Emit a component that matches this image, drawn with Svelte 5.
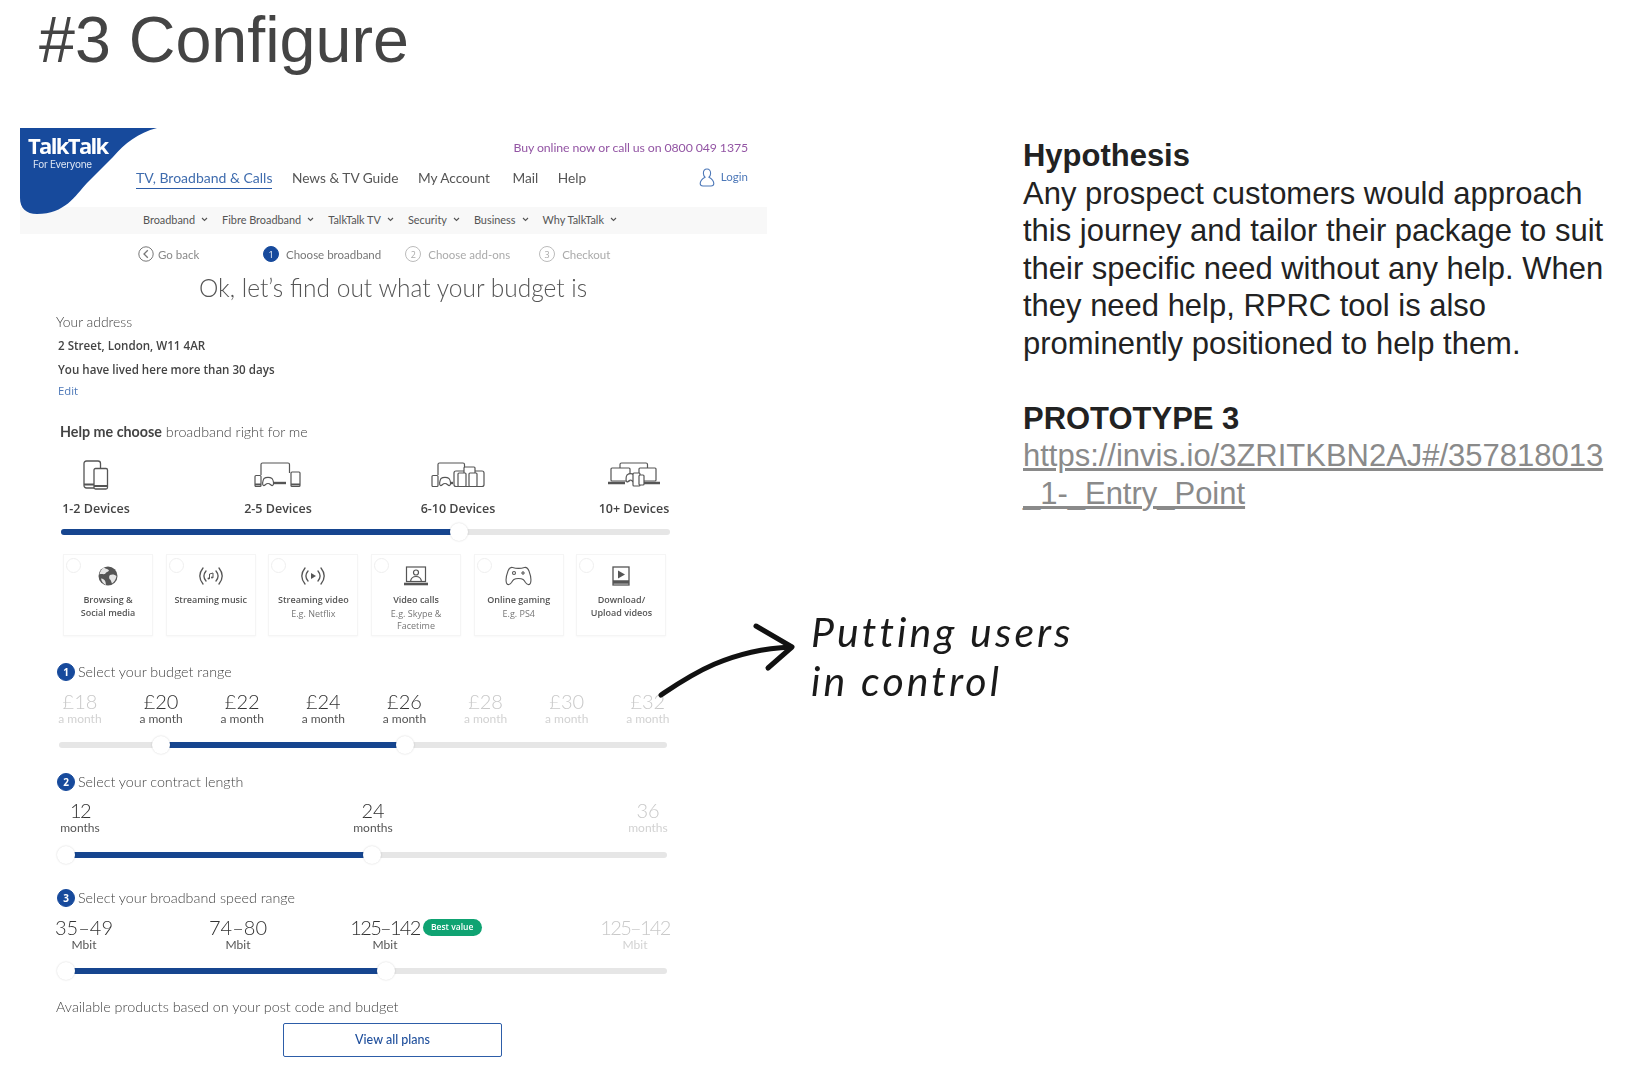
<script>
  const subnav = ['Broadband', 'Fibre Broadband', 'TalkTalk TV', 'Security', 'Business', 'Why TalkTalk'];
  const budget = [18, 20, 22, 24, 26, 28, 30, 32].map((v) => ({ v, on: v >= 20 && v <= 26 }));
  const cards = [
    { k: 'globe', t: ['Browsing &', 'Social media'], s: [] },
    { k: 'music', t: ['Streaming music'], s: [] },
    { k: 'video', t: ['Streaming video'], s: ['E.g. Netflix'] },
    { k: 'call', t: ['Video calls'], s: ['E.g. Skype &', 'Facetime'] },
    { k: 'game', t: ['Online gaming'], s: ['E.g. PS4'] },
    { k: 'down', t: ['Download/', 'Upload videos'], s: [] }
  ];
  const pct = (px) => ((px - 59) / 608) * 100;
</script>

<div class="page">
  <h1 class="title">#3 Configure</h1>
  <div class="content">
    <div class="mock">
      <header class="head">
        <div class="logo">
          <svg class="logo-bg" width="138" height="87" viewBox="0 0 138 87">
            <path d="M0 0H137C118 5 105 15 93 29L67 55C55 68 45 86 17 86C6 86 0 80 0 70Z" fill="#174a9c" />
          </svg>
          <span class="logo-a">TalkTalk</span>
          <span class="logo-b">For Everyone</span>
        </div>
        <div class="buy">Buy online now or call us on 0800 049 1375</div>
        <nav class="nav">
          <span class="active">TV, Broadband &amp; Calls</span>
          <span>News &amp; TV Guide</span>
          <span>My Account</span>
          <span class="mail">Mail</span>
          <span>Help</span>
          <span class="login">
            <svg width="16" height="19" viewBox="0 0 16 19" fill="none" stroke="#4d78b8" stroke-width="1.1">
              <path d="M8 1C5.6 1 4.4 3 4.4 5.2C4.4 7 5.2 8.4 6 9.2C3.6 10.6 1.2 13 1.2 15.6C1.2 17.2 2.4 18 4 18H12C13.6 18 14.8 17.2 14.8 15.6C14.8 13 12.4 10.6 10 9.2C10.8 8.4 11.6 7 11.6 5.2C11.6 3 10.4 1 8 1Z" />
            </svg>
            Login
          </span>
        </nav>
      </header>

      <div class="subnav">
        {#each subnav as item}
          <span class="sub-item">{item}
            <svg width="7" height="5" viewBox="0 0 7 5" fill="none" stroke="#555" stroke-width="1.1"><path d="M1 1l2.5 2.5L6 1" /></svg>
          </span>
        {/each}
      </div>

      <div class="steps">
        <span class="back">
          <svg width="16" height="16" viewBox="0 0 16 16" fill="none" stroke="#777" stroke-width="1"><circle cx="8" cy="8" r="7.2" /><path d="M9.8 4.2L6 8l3.8 3.8" stroke-width="1.3" /></svg>
          Go back
        </span>
        <span class="step now"><i class="dot solid">1</i>Choose broadband</span>
        <span class="step"><i class="dot">2</i>Choose add-ons</span>
        <span class="step last"><i class="dot">3</i>Checkout</span>
      </div>

      <h2 class="lead">Ok, let’s find out what your budget is</h2>

      <div class="addr">
        <div class="addr-h">Your address</div>
        <div class="addr-l">2 Street, London, W11 4AR</div>
        <div class="addr-l">You have lived here more than 30 days</div>
        <div class="addr-e">Edit</div>
      </div>

      <div class="help"><b>Help me choose</b> broadband right for me</div>

      <div class="devices">
        <div class="device">
          <svg width="26" height="30" viewBox="0 0 26 30" fill="none" stroke="#555" stroke-width="1.3">
            <path d="M13 28H3.5C2 28 1 27 1 25.5V3.5C1 2 2 1 3.5 1H15C16.6 1 17.5 2 17.5 3.5V8" />
            <rect x="11" y="8.5" width="13.5" height="20.5" rx="1.5" fill="#fff" />
            <path d="M11 26h13.5M1 24.5h10" stroke-width="2" />
          </svg>
          <span>1-2 Devices</span>
        </div>
        <div class="device">
          <svg width="48" height="26" viewBox="0 0 48 26" fill="none" stroke="#555" stroke-width="1.2">
            <path d="M7 13V2.5C7 1.5 7.5 1 8.5 1H34C35 1 35.5 1.5 35.5 2.5V11" />
            <path d="M15 21H32" stroke-width="2.4" />
            <rect x="1" y="13.5" width="6" height="11" rx="1" fill="#fff" />
            <path d="M10 16.5C12 15 16 15 18 16.5C20 19 20 23 18.5 23.5C17 24 16.5 21.5 14 21.5C11.5 21.5 11 24 9.5 23.5C8 23 8.5 19 10 16.5Z" fill="#fff" />
            <rect x="37" y="10" width="9" height="14.5" rx="1" fill="#fff" />
            <path d="M37 22.5h9M1 22.5h6" stroke-width="1.8" />
          </svg>
          <span>2-5 Devices</span>
        </div>
        <div class="device">
          <svg width="54" height="26" viewBox="0 0 54 26" fill="none" stroke="#555" stroke-width="1.2">
            <path d="M7 13V2.5C7 1.5 7.5 1 8.5 1H32C33 1 33.5 1.5 33.5 2.5V6" />
            <path d="M15 21H22" stroke-width="2.4" />
            <rect x="1" y="13.5" width="6" height="11" rx="1" fill="#fff" />
            <path d="M10 16.5C12 15 16 15 18 16.5C20 19 20 23 18.5 23.5C17 24 16.5 21.5 14 21.5C11.5 21.5 11 24 9.5 23.5C8 23 8.5 19 10 16.5Z" fill="#fff" />
            <rect x="23" y="9" width="30" height="15.5" rx="2" fill="#fff" />
            <rect x="33" y="5" width="11" height="19.5" rx="1" fill="#fff" />
            <rect x="27" y="11" width="8" height="13.5" rx="1" fill="#fff" />
            <rect x="38" y="11" width="8" height="13.5" rx="1" fill="#fff" />
          </svg>
          <span>6-10 Devices</span>
        </div>
        <div class="device">
          <svg width="54" height="26" viewBox="0 0 54 26" fill="none" stroke="#555" stroke-width="1.2">
            <path d="M13 8V2.5C13 1.5 13.5 1 14.5 1H39C40 1 40.5 1.5 40.5 2.5V8" />
            <rect x="4" y="6" width="19" height="13" rx="1" fill="#fff" />
            <rect x="32" y="6" width="17" height="13" rx="1" fill="#fff" />
            <path d="M1 21H18M36 21H53" stroke-width="2.6" />
            <path d="M20 13C22 11.5 25 11.5 27 13C29 15 28 20 27 20C25.5 20 25 18 23.5 18C22 18 21.5 20 20 20C19 20 18.5 15 20 13Z" fill="#fff" />
            <rect x="26" y="11" width="7" height="13" rx="1" fill="#fff" />
            <rect x="32" y="13" width="5" height="10" rx="1" fill="#fff" />
          </svg>
          <span>10+ Devices</span>
        </div>
      </div>

      <div class="slider dev">
        <div class="fill" style="left:0;width:65%"></div>
        <div class="thumb" style="left:65.4%"></div>
      </div>

      <div class="cards">
        {#each cards as c}
          <div class="card">
            <i class="radio"></i>
            <div class="ic">
              {#if c.k === 'globe'}
                <svg width="20" height="20" viewBox="0 0 20 20">
                  <circle cx="10" cy="10" r="9.5" fill="#555" />
                  <path d="M6 1.5C8 3 10 3 11 4.5C10 6 8 6 7 8C5 8.5 3 7.5 1.5 8.5C2 5.5 3.5 3 6 1.5ZM12 9C14 8 17 8.5 18.5 10C18 13 16.5 16 14 17.5C13 15 13 14 11.5 13C11 11.5 11 10 12 9ZM3 12.5C5 12.5 7 14 7.5 16C7.5 17 8 18 8 19C5.5 18 3.5 15.5 3 12.5Z" fill="#fff" opacity=".85" />
                </svg>
              {:else if c.k === 'music' || c.k === 'video'}
                <svg width="28" height="20" viewBox="0 0 28 20" fill="none" stroke="#555" stroke-width="1.3" stroke-linecap="round">
                  <path d="M6 2C2 7 2 13 6 18M9 5C6.5 8 6.5 12 9 15M22 2C26 7 26 13 22 18M19 5C21.5 8 21.5 12 19 15" />
                  {#if c.k === 'video'}
                    <path d="M12 7L17 10L12 13Z" fill="#555" stroke="none" />
                  {:else}
                    <path d="M12.5 12.5V8L16 7V11.5" stroke-width="1" /><circle cx="11.5" cy="12.5" r="1" fill="#555" stroke="none" /><circle cx="15" cy="11.5" r="1" fill="#555" stroke="none" />
                  {/if}
                </svg>
              {:else if c.k === 'call'}
                <svg width="26" height="20" viewBox="0 0 26 20" fill="none" stroke="#555" stroke-width="1.2">
                  <rect x="3.5" y="1" width="19" height="14.5" />
                  <circle cx="13" cy="6.5" r="2.5" />
                  <path d="M7.5 15.5C8 12 10 10.5 13 10.5C16 10.5 18 12 18.5 15.5" />
                  <path d="M1 18h24" stroke-width="2.6" />
                </svg>
              {:else if c.k === 'game'}
                <svg width="27" height="20" viewBox="0 0 27 20" fill="none" stroke="#555" stroke-width="1.1">
                  <path d="M7.5 1.5C11 2.5 16 2.5 19.5 1.5C21.5 1 23 2.5 24 5C25.5 9 26.5 14 25.5 17C24.5 19.5 22 18.8 20.5 16.5C19 14 18 12.5 13.5 12.5C9 12.5 8 14 6.5 16.5C5 18.8 2.5 19.5 1.5 17C.5 14 1.5 9 3 5C4 2.5 5.5 1 7.5 1.5Z" />
                  <circle cx="9" cy="7" r="1.5" /><path d="M16 7h4M18 5v4" />
                </svg>
              {:else}
                <svg width="18" height="20" viewBox="0 0 18 20" fill="none" stroke="#555" stroke-width="1.3">
                  <rect x="1" y="1" width="16" height="18" />
                  <path d="M6 4.5L13 8.5L6 12.5Z" fill="#555" stroke="none" />
                  <path d="M1 16h16" stroke-width="3.5" />
                </svg>
              {/if}
            </div>
            {#each c.t as line}<div class="c-t">{line}</div>{/each}
            {#each c.s as line}<div class="c-s">{line}</div>{/each}
          </div>
        {/each}
      </div>

      <div class="sec first"><i class="dot solid">1</i>Select your budget range</div>
      <div class="vals budget">
        {#each budget as b}
          <div class="val" class:off={!b.on}><b>£{b.v}</b><span>a month</span></div>
        {/each}
      </div>
      <div class="slider">
        <div class="fill" style="left:{pct(161)}%;width:{pct(405) - pct(161)}%"></div>
        <div class="thumb" style="left:{pct(161)}%"></div>
        <div class="thumb" style="left:{pct(405)}%"></div>
      </div>

      <div class="sec second"><i class="dot solid">2</i>Select your contract length</div>
      <div class="vals contract">
        <div class="val"><b class="tight-1">12</b><span>months</span></div>
        <div class="val"><b>24</b><span>months</span></div>
        <div class="val off"><b>36</b><span>months</span></div>
      </div>
      <div class="slider">
        <div class="fill" style="left:{pct(66)}%;width:{pct(372) - pct(66)}%"></div>
        <div class="thumb" style="left:{pct(66)}%"></div>
        <div class="thumb" style="left:{pct(372)}%"></div>
      </div>

      <div class="sec third"><i class="dot solid">3</i>Select your broadband speed range</div>
      <div class="vals speed">
        <div class="val"><b>35–49</b><span>Mbit</span></div>
        <div class="val"><b>74–80</b><span>Mbit</span></div>
        <div class="val"><b class="has-badge tight">125–142<em class="badge">Best value</em></b><span>Mbit</span></div>
        <div class="val off"><b class="tight">125–142</b><span>Mbit</span></div>
      </div>
      <div class="slider">
        <div class="fill" style="left:{pct(66)}%;width:{pct(386) - pct(66)}%"></div>
        <div class="thumb" style="left:{pct(66)}%"></div>
        <div class="thumb" style="left:{pct(386)}%"></div>
      </div>

      <div class="avail">Available products based on your post code and budget</div>
      <div class="plans">View all plans</div>
    </div>

    <aside class="side">
      <div class="strong">Hypothesis</div>
      <p>Any prospect customers would approach this journey and tailor their package to suit their specific need without any help. When they need help, RPRC tool is also prominently positioned to help them.</p>
      <div class="strong gap">PROTOTYPE 3</div>
      <div class="link">https://invis.io/3ZRITKBN2AJ#/357818013<br />_1-_Entry_Point</div>
    </aside>
  </div>

  <div class="note">
    <svg width="150" height="90" viewBox="0 0 150 90" fill="none" stroke="#111" stroke-width="5" stroke-linecap="round" stroke-linejoin="round">
      <path d="M3 73C30 55 68 28 133 25" />
      <path d="M98 4L134 25L110 46" />
    </svg>
    <div class="hand">Putting users<br />in control</div>
  </div>
</div>

<style>
  :global(body) { margin: 0; background: #fff; }
  .page { position: relative; width: 1650px; height: 1067px; overflow: hidden; background: #fff; font-family: Lato, "Liberation Sans", sans-serif; color: #444; }
  .title { margin: 0; height: 128px; padding-left: 39px; font: 400 64.6px/80px "Liberation Sans", Arial, sans-serif; color: #444; }
  .content { display: grid; grid-template-columns: 1023px 1fr; }
  .mock { filter: blur(0.4px); }

  .head { position: relative; margin-left: 20px; width: 747px; height: 79px; padding: 0 19px 0 116px; box-sizing: border-box; }
  .logo { position: absolute; left: 0; top: 0; width: 138px; height: 87px; z-index: 2; }
  .logo-bg { position: absolute; left: 0; top: 0; }
  .logo-a { position: absolute; left: 8px; top: 6px; color: #fff; font: 700 22px/22px "Open Sans", sans-serif; letter-spacing: -1.65px; }
  .logo-b { position: absolute; left: 13px; top: 30px; color: #dfe7f4; font: 400 10px/12px Inter, sans-serif; letter-spacing: -.3px; }
  .buy { height: 40px; line-height: 40px; text-align: right; font-size: 12.3px; color: #9355a4; letter-spacing: -.1px; }
  .nav { display: flex; height: 20px; line-height: 20px; font-size: 13.7px; gap: 19.5px; color: #555; }
  .mail { margin-left: 3px; }
  .active { color: #3f6cae; position: relative; font-size: 14px; }
  .active::after { content: ""; position: absolute; left: 0; right: 0; bottom: -1px; height: 1px; background: #2d5da8; }
  .login { margin-left: auto; margin-top: -2px; display: flex; align-items: center; gap: 6px; color: #4d78b8; font-size: 11.5px; }

  .subnav { margin-left: 20px; width: 747px; height: 27px; box-sizing: border-box; padding: 0 0 2px 123px; background: #f8f8f8; display: flex; align-items: center; gap: 14px; font-size: 10.9px; color: #555; position: relative; }
  .sub-item { display: flex; align-items: center; gap: 6px; white-space: nowrap; }

  .steps { height: 40px; padding-left: 138px; display: flex; align-items: center; font-size: 11.5px; color: #aaa; }
  .back { display: flex; align-items: center; gap: 4px; width: 125px; color: #888; }
  .step { display: flex; align-items: center; gap: 7px; margin-right: 24px; white-space: nowrap; }
  .step.now { color: #777; }
  .step.last { margin-left: 5px; }
  .dot { width: 16px; height: 16px; border-radius: 50%; border: 1px solid #bbb; box-sizing: border-box; display: inline-flex; align-items: center; justify-content: center; font: 400 9px "Open Sans", sans-serif; color: #aaa; flex: none; }
  .dot.solid { background: #174a9c; border-color: #174a9c; color: #fff; }

  .lead { margin: 2px 0 0 199px; height: 24px; font: 300 24.5px/24px Lato, sans-serif; color: #555; white-space: nowrap; }
  .addr { padding-left: 56px; margin-top: 12px; }
  .addr-h { height: 20px; line-height: 20px; font-size: 13.9px; font-weight: 300; color: #444; }
  .addr-l { margin: 4px 0 0 2px; height: 20px; font: 600 11.6px/20px "Open Sans", sans-serif; color: #444; }
  .addr-e { margin: 1px 0 0 2px; height: 20px; font: 400 11.3px/20px "Open Sans", sans-serif; color: #4d78b8; }

  .help { margin: 20px 0 0 60px; height: 21px; line-height: 21px; font-size: 14.3px; font-weight: 300; color: #444; }
  .help b { font-weight: 700; color: #444; }

  .devices { margin: 18px 0 0 6px; display: grid; grid-template-columns: 180px 184px 176px 176px; }
  .device { display: flex; flex-direction: column; align-items: center; }
  .device svg { height: 30px; display: block; }
  .device span { margin-top: 9px; height: 20px; font: 600 12.5px/20px "Open Sans", sans-serif; color: #444; white-space: nowrap; }

  .slider { position: relative; margin-left: 59px; width: 608px; height: 6px; background: #e6e6e6; border-radius: 3px; }
  .slider.dev { margin: 10px 0 0 61px; width: 609px; }
  .fill { position: absolute; top: 0; bottom: 0; background: #16458f; border-radius: 3px 0 0 3px; }
  .thumb { position: absolute; top: -6px; width: 18px; height: 18px; margin-left: -9px; border-radius: 50%; background: #fff; box-shadow: 0 0 2px rgba(0, 0, 0, .18); }

  .cards { margin: 19px 0 0 63px; display: grid; grid-template-columns: repeat(6, 90px); column-gap: 12.7px; }
  .card { position: relative; height: 82px; box-sizing: border-box; border: 1px solid #f5f5f5; box-shadow: 0 1px 2px rgba(0, 0, 0, .03); text-align: center; padding-top: 10px; }
  .radio { position: absolute; left: 2px; top: 3px; width: 13px; height: 13px; border: 1px solid #eee; border-radius: 50%; }
  .ic { height: 22px; display: flex; align-items: center; justify-content: center; margin-bottom: 7px; }
  .c-t { font: 600 9px/12.5px "Open Sans", sans-serif; color: #555; white-space: nowrap; }
  .c-s { font: 400 9px/12.5px "Open Sans", sans-serif; color: #777; white-space: nowrap; }
  .c-t + .c-s { margin-top: 1px; }

  .sec { margin-left: 57px; height: 20px; line-height: 20px; display: flex; align-items: center; gap: 3px; font-size: 14.3px; font-weight: 300; color: #444; white-space: nowrap; }
  .sec .dot { width: 18px; height: 18px; font-size: 10px; font-weight: 700; }
  .sec.first { margin-top: 26px; }
  .sec.second { margin-top: 24px; }
  .sec.third { margin-top: 30px; }

  .vals { display: grid; margin-top: 9px; }
  .vals.budget { margin-left: 39.4px; grid-template-columns: repeat(8, 81.14px); }
  .vals.contract { margin-top: 8px; grid-template-columns: 160px 426px 124px; }
  .vals.speed { grid-template-columns: 168px 140px 154px 346px; }
  .val { display: flex; flex-direction: column; align-items: center; color: #333; }
  .val b { height: 20px; font-weight: 300; font-size: 20px; line-height: 20px; white-space: nowrap; }
  .val b.tight { letter-spacing: -1.7px; }
  .val b.tight-1 { letter-spacing: -1.5px; }
  .val span { height: 15px; line-height: 15px; font-size: 12px; font-weight: 400; color: #555; }
  .val.off b { color: #c9c9c9; }
  .val.off span { color: #d2d2d2; }
  .vals + .slider { margin-top: 16px; }
  .vals.contract + .slider { margin-top: 17px; }

  .has-badge { position: relative; }
  .badge { position: absolute; left: calc(100% + 3px); top: 2px; width: 59px; height: 17px; border-radius: 9px; background: #0fa372; color: #fff; font: 600 8.5px/16px "Open Sans", sans-serif; letter-spacing: 0; text-align: center; }

  .avail { margin: 23px 0 0 56px; height: 20px; line-height: 20px; font-size: 14.35px; font-weight: 300; color: #444; white-space: nowrap; }
  .plans { margin: 6px 0 0 283px; width: 219px; height: 34px; box-sizing: border-box; border: 1.5px solid #2d5da8; border-radius: 2px; font: 500 12.5px/31px Lato, sans-serif; color: #1f4f9c; text-align: center; }

  .side { margin-top: 9px; font: 400 30.97px/37.5px "Liberation Sans", Arial, sans-serif; color: #222; width: 610px; }
  .side p { margin: 0; width: 595px; }
  .strong { font-weight: 700; }
  .gap { margin-top: 37.5px; }
  .link { color: #8a8a8a; text-decoration: underline; white-space: nowrap; }

  .note { position: absolute; left: 658px; top: 622px; }
  .note svg { display: block; }
  .hand { position: absolute; left: 153px; top: -15px; font: italic 400 41px/49px Lato, sans-serif; letter-spacing: 3.1px; color: #1a1a1a; white-space: nowrap; }
</style>
